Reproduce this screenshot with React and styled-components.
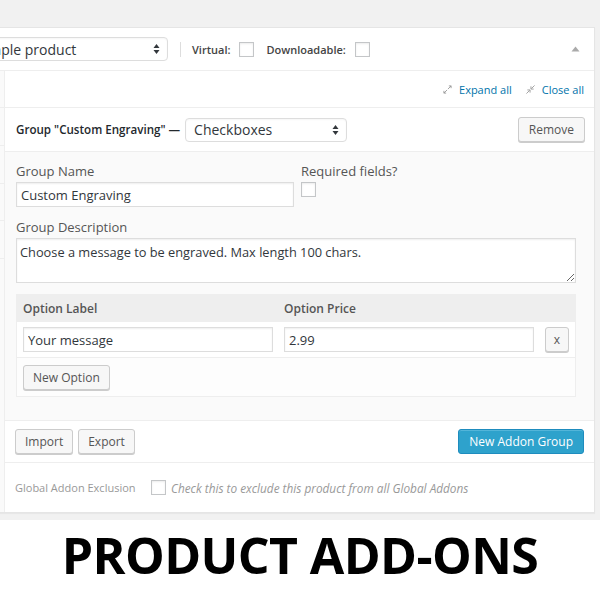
import React from "react";
import styled, { createGlobalStyle } from "styled-components";

const GlobalStyle = createGlobalStyle`
  html, body {
    margin: 0;
    padding: 0;
    background: #fff;
  }
  body {
    font-family: "Open Sans", "Liberation Sans", sans-serif;
    color: #444;
    font-size: 13px;
  }
  * {
    box-sizing: border-box;
  }
`;

const Page = styled.div`
  width: 600px;
  height: 600px;
  overflow: hidden;
  display: flex;
  flex-direction: column;
`;

const Stage = styled.div`
  background: #f1f1f1;
  padding: 27px 5px 7px 0;
`;

const Panel = styled.div`
  background: #fff;
  border: 1px solid #e5e5e5;
  border-left: none;
  box-shadow: 0 1px 1px rgba(0, 0, 0, 0.04);
  overflow: hidden;
`;

const Header = styled.div`
  height: 43px;
  display: flex;
  align-items: center;
  border-bottom: 1px solid #eee;
  padding-right: 14px;
`;

const FakeSelect = styled.div`
  width: ${(p) => p.$width}px;
  margin-left: ${(p) => p.$offset || 0}px;
  height: 24px;
  border: 1px solid #ddd;
  border-radius: 4px;
  background: #fff;
  box-shadow: inset 0 1px 2px rgba(0, 0, 0, 0.04);
  display: flex;
  align-items: center;
  justify-content: space-between;
  padding: 0 7px 0 8px;
  font-size: 14px;
  color: #32373c;
  flex-shrink: 0;
`;

const Divider = styled.span`
  width: 1px;
  height: 15px;
  background: #ddd;
  margin: 0 11px 0 12px;
`;

const HeaderLabel = styled.span`
  font-size: 11px;
  font-weight: 600;
  color: #444;
  margin-right: 9px;
`;

const Check = styled.span`
  display: inline-block;
  width: 15px;
  height: 15px;
  border: 1px solid #c4c6c8;
  background: #fff;
  box-shadow: inset 0 1px 2px rgba(0, 0, 0, 0.08);
  margin-right: ${(p) => p.$gap || 0}px;
  flex-shrink: 0;
`;

const Spacer = styled.div`
  flex: 1;
`;

const Body = styled.div`
  display: flex;
`;

const Tabs = styled.div`
  width: 5px;
  background: #fafafa;
  border-right: 1px solid #eee;
  display: flex;
  flex-direction: column;
`;

const TabItem = styled.div`
  height: ${(p) => p.$h}px;
  border-bottom: 1px solid #eee;
`;

const Main = styled.div`
  flex: 1;
  min-width: 0;
`;

const Toolbar = styled.div`
  height: 37px;
  display: flex;
  align-items: center;
  justify-content: flex-end;
  gap: 14px;
  padding-right: 10px;
  border-bottom: 1px solid #eee;
`;

const ToolLink = styled.span`
  display: flex;
  align-items: center;
  gap: 7px;
  font-size: 11px;
  color: #0073aa;
`;

const GroupHead = styled.div`
  height: 44px;
  display: flex;
  align-items: center;
  padding: 0 9px 0 11px;
  border-bottom: 1px solid #eee;
`;

const GroupTitle = styled.strong`
  font-size: 11.6px;
  font-weight: 600;
  color: #23282d;
  margin-right: 5px;
`;

const Button = styled.span`
  display: inline-flex;
  align-items: center;
  justify-content: center;
  height: 25px;
  padding: 0 ${(p) => p.$pad ?? 9}px;
  min-width: ${(p) => p.$min || 0}px;
  border: 1px solid ${(p) => (p.$primary ? "#1e8cbe" : "#ccc")};
  border-radius: 3px;
  background: ${(p) => (p.$primary ? "#2ea2cc" : "#f7f7f7")};
  box-shadow: ${(p) =>
    p.$primary ? "inset 0 1px 0 rgba(120,200,230,.5)" : "0 1px 0 #ccc"};
  color: ${(p) => (p.$primary ? "#fff" : "#555")};
  font-size: 12px;
  white-space: nowrap;
`;

const GroupBody = styled.div`
  background: #fafafa;
  padding: 10px 18px 23px 11px;
`;

const FieldRow = styled.div`
  display: flex;
  gap: 7px;
  margin-bottom: 11px;
`;

const Field = styled.div`
  display: flex;
  flex-direction: column;
  width: ${(p) => (p.$width ? `${p.$width}px` : "auto")};
  flex: ${(p) => (p.$width ? "none" : 1)};
`;

const Label = styled.label`
  font-size: 13px;
  color: #555;
  line-height: 18px;
  margin-bottom: 2px;
`;

const Input = styled.input`
  height: 25px;
  width: 100%;
  border: 1px solid #ddd;
  background: #fff;
  box-shadow: inset 0 1px 2px rgba(0, 0, 0, 0.07);
  font-family: "Open Sans", "Liberation Sans", sans-serif;
  font-size: 13px;
  color: #32373c;
  padding: 0 4px;
  margin: 0;
  outline: none;
`;

const TextArea = styled.textarea`
  height: 45px;
  width: 100%;
  border: 1px solid #ddd;
  background: #fff;
  box-shadow: inset 0 1px 2px rgba(0, 0, 0, 0.07);
  font-family: "Open Sans", "Liberation Sans", sans-serif;
  font-size: 12.8px;
  color: #32373c;
  padding: 4px 3px;
  margin: 0;
  outline: none;
  display: block;
`;

const Options = styled.div`
  margin-top: 11px;
  border: 1px solid #eee;
  background: #fdfdfd;
`;

const OptionGrid = styled.div`
  display: grid;
  grid-template-columns: 261px 1fr 35px;
  align-items: center;
  padding: ${(p) => (p.$head ? "0 6px" : "5px 6px")};
  height: ${(p) => (p.$head ? "27px" : "auto")};
  background: ${(p) => (p.$head ? "#eee" : "#fff")};
  border-bottom: 1px solid #eee;
`;

const HeadCell = styled.span`
  font-size: 12px;
  font-weight: 600;
  color: #555;
`;

const Cell = styled.div`
  padding-right: ${(p) => p.$pad || 0}px;
  display: flex;
  justify-content: ${(p) => (p.$end ? "flex-end" : "flex-start")};
`;

const OptionFooter = styled.div`
  padding: 7px 6px 6px;
`;

const Actions = styled.div`
  height: 43px;
  display: flex;
  align-items: center;
  gap: 5px;
  padding: 0 10px 0 10px;
  border-top: 1px solid #eee;
  border-bottom: 1px solid #eee;
  background: #fff;
`;

const Exclusion = styled.div`
  height: 49px;
  display: flex;
  align-items: center;
  padding-left: 10px;
  font-size: 11px;
  color: #999;
`;

const ExclusionLabel = styled.span`
  width: 136px;
`;

const Hint = styled.em`
  margin-left: 5px;
  font-size: 11.8px;
  color: #999;
`;

const TitleArea = styled.div`
  flex: 1;
  display: flex;
  justify-content: center;
  padding-top: 2px;
  background: #fff;
`;

const Title = styled.h1`
  margin: 0;
  font-family: "Open Sans", "Liberation Sans", sans-serif;
  font-weight: 700;
  font-size: 50px;
  letter-spacing: -0.6px;
  color: #000;
  line-height: 66px;
`;

const SelectArrows = () => (
  <svg width="7" height="12" viewBox="0 0 7 12">
    <path d="M3.5 1 L6.5 5 H0.5 Z" fill="#32373c" />
    <path d="M3.5 11 L6.5 7 H0.5 Z" fill="#32373c" />
  </svg>
);

const CollapseArrow = () => (
  <svg width="9" height="6" viewBox="0 0 9 6">
    <path d="M4.5 0.5 L8.5 5.5 H0.5 Z" fill="#aaa" />
  </svg>
);

const ExpandIcon = () => (
  <svg width="9" height="9" viewBox="0 0 10 10" fill="none" stroke="#999" strokeWidth="1">
    <path d="M5.5 4.5 L9 1" />
    <path d="M6.5 1 H9 V3.5" />
    <path d="M4.5 5.5 L1 9" />
    <path d="M1 6.5 V9 H3.5" />
  </svg>
);

const CloseIcon = () => (
  <svg width="9" height="9" viewBox="0 0 10 10" fill="none" stroke="#999" strokeWidth="1">
    <path d="M6 4 L9.5 0.5" />
    <path d="M5.5 1.5 V4.5 H8.5" />
    <path d="M4 6 L0.5 9.5" />
    <path d="M1.5 5.5 H4.5 V8.5" />
  </svg>
);

const options = [{ label: "Your message", price: "2.99" }];

export default function App() {
  return (
    <Page>
      <GlobalStyle />
      <Stage>
        <Panel>
          <Header>
            <FakeSelect $width={200} $offset={-32}>
              <span>Simple product</span>
              <SelectArrows />
            </FakeSelect>
            <Divider />
            <HeaderLabel>Virtual:</HeaderLabel>
            <Check $gap={12} />
            <HeaderLabel>Downloadable:</HeaderLabel>
            <Check />
            <Spacer />
            <CollapseArrow />
          </Header>
          <Body>
            <Tabs>
              <TabItem $h={37} />
              <TabItem $h={38} />
              <TabItem $h={38} />
              <TabItem $h={37} />
              <TabItem $h={38} />
            </Tabs>
            <Main>
              <Toolbar>
                <ToolLink>
                  <ExpandIcon />
                  Expand all
                </ToolLink>
                <ToolLink>
                  <CloseIcon />
                  Close all
                </ToolLink>
              </Toolbar>
              <GroupHead>
                <GroupTitle>Group "Custom Engraving" —</GroupTitle>
                <FakeSelect $width={162}>
                  <span>Checkboxes</span>
                  <SelectArrows />
                </FakeSelect>
                <Spacer />
                <Button $pad={10}>Remove</Button>
              </GroupHead>
              <GroupBody>
                <FieldRow>
                  <Field $width={278}>
                    <Label>Group Name</Label>
                    <Input readOnly value="Custom Engraving" />
                  </Field>
                  <Field>
                    <Label>Required fields?</Label>
                    <Check />
                  </Field>
                </FieldRow>
                <Field>
                  <Label>Group Description</Label>
                  <TextArea
                    readOnly
                    value="Choose a message to be engraved. Max length 100 chars."
                  />
                </Field>
                <Options>
                  <OptionGrid $head>
                    <HeadCell>Option Label</HeadCell>
                    <HeadCell>Option Price</HeadCell>
                    <span />
                  </OptionGrid>
                  {options.map((o) => (
                    <OptionGrid key={o.label}>
                      <Cell $pad={11}>
                        <Input readOnly value={o.label} />
                      </Cell>
                      <Cell>
                        <Input readOnly value={o.price} />
                      </Cell>
                      <Cell $end>
                        <Button $pad={0} $min={24}>x</Button>
                      </Cell>
                    </OptionGrid>
                  ))}
                  <OptionFooter>
                    <Button>New Option</Button>
                  </OptionFooter>
                </Options>
              </GroupBody>
              <Actions>
                <Button>Import</Button>
                <Button>Export</Button>
                <Spacer />
                <Button $primary $pad={10}>New Addon Group</Button>
              </Actions>
              <Exclusion>
                <ExclusionLabel>Global Addon Exclusion</ExclusionLabel>
                <Check />
                <Hint>Check this to exclude this product from all Global Addons</Hint>
              </Exclusion>
            </Main>
          </Body>
        </Panel>
      </Stage>
      <TitleArea>
        <Title>PRODUCT ADD-ONS</Title>
      </TitleArea>
    </Page>
  );
}
